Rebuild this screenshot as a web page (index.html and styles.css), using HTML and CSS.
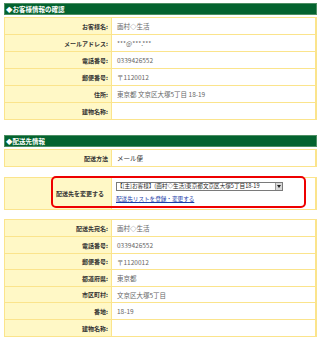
FILE: index.html
```html
<!DOCTYPE html>
<html lang="ja">
<head>
<meta charset="utf-8">
<link rel="stylesheet" href="styles.css">
</head>
<body>
<div class="page">
  <div class="head first">◆お客様情報の確認</div>
  <div class="tbl">
    <div class="row"><div class="lab">お客様名:</div><div class="val">画村◇生活</div></div>
    <div class="row"><div class="lab">メールアドレス:</div><div class="val">***@***.***</div></div>
    <div class="row"><div class="lab">電話番号:</div><div class="val">0339426552</div></div>
    <div class="row"><div class="lab">郵便番号:</div><div class="val">〒1120012</div></div>
    <div class="row"><div class="lab">住所:</div><div class="val">東京都 文京区大塚5丁目 18-19</div></div>
    <div class="row"><div class="lab">建物名称:</div><div class="val"></div></div>
  </div>

  <div class="head second">◆配送先情報</div>
  <div class="tbl">
    <div class="row"><div class="lab">配送方法</div><div class="val dark">メール便</div></div>
  </div>

  <div class="tbl gap">
    <div class="row tall">
      <div class="lab mid">配送先を変更する</div>
      <div class="val stack">
        <div class="sel"><span class="seltext">【[主]お客様】(画村◇生活)東京都文京区大塚5丁目18-19</span><span class="arrow"></span></div>
        <a class="link" href="#">配送先リストを登録・変更する</a>
      </div>
    </div>
  </div>

  <div class="tbl gap2">
    <div class="row"><div class="lab">配送先宛名:</div><div class="val">画村◇生活</div></div>
    <div class="row"><div class="lab">電話番号:</div><div class="val">0339426552</div></div>
    <div class="row r15"><div class="lab">郵便番号:</div><div class="val">〒1120012</div></div>
    <div class="row"><div class="lab">都道府県:</div><div class="val">東京都</div></div>
    <div class="row r15"><div class="lab">市区町村:</div><div class="val">文京区大塚5丁目</div></div>
    <div class="row"><div class="lab">番地:</div><div class="val">18-19</div></div>
    <div class="row"><div class="lab">建物名称:</div><div class="val"></div></div>
  </div>

  <div class="mark"></div>
</div>
</body>
</html>
```

FILE: styles.css
```css
html, body {
  margin: 0;
  padding: 0;
  background: #ffffff;
}
.page {
  position: relative;
  width: 313px;
  margin-left: 4px;
  padding-top: 3px;
  font-family: "Noto Sans CJK JP", "Liberation Sans", sans-serif;
  font-size: 6px;
}
.head {
  height: 10px;
  line-height: 10px;
  background: #04632f;
  border: 1px solid #4d8f63;
  color: #ffffff;
  font-weight: bold;
  font-size: 6.5px;
  padding-left: 1px;
  margin-bottom: 2px;
  white-space: nowrap;
}
.second {
  margin-top: 15px;
}
.tbl {
  border: 1px solid #fbe48c;
  border-right-width: 2px;
}
.gap { margin-top: 10px; }
.gap2 { margin-top: 9px; }
.row {
  display: grid;
  grid-template-columns: 107px 1fr;
  height: 16px;
  border-top: 1px solid #fbe48c;
}
.row:first-child { border-top: none; }
.row.r15 { height: 15px; }
.row.tall { height: 31px; }
.lab {
  background: #fff8c6;
  border-right: 1px solid #fbe48c;
  font-weight: bold;
  color: #333333;
  padding-right: 3px;
  display: flex;
  align-items: center;
  justify-content: flex-end;
  white-space: nowrap;
}
.lab.mid { padding-right: 7px; }
.val {
  color: #666666;
  padding-left: 5px;
  display: flex;
  align-items: center;
  white-space: nowrap;
  font-size: 6.5px;
}
.val.dark { color: #333333; }
.stack {
  flex-direction: column;
  align-items: flex-start;
  justify-content: flex-start;
  padding-top: 4px;
  padding-left: 4px;
}
.sel {
  display: flex;
  align-items: center;
  width: 165px;
  height: 7px;
  border: 1px solid #7a7a7a;
  background: #ffffff;
  color: #222222;
  font-size: 5.6px;
  overflow: hidden;
}
.seltext {
  flex: 1;
  overflow: hidden;
  line-height: 7px;
}
.arrow {
  width: 6px;
  height: 7px;
  background: #d8d8d8;
  border-left: 1px solid #9a9a9a;
  position: relative;
}
.arrow::after {
  content: "";
  position: absolute;
  left: 1px;
  top: 2px;
  border-left: 2px solid transparent;
  border-right: 2px solid transparent;
  border-top: 3px solid #222222;
}
.link {
  margin-top: 4px;
  color: #1a3ca8;
  font-size: 5.6px;
  text-decoration: underline;
}
.mark {
  position: absolute;
  left: 47px;
  top: 176px;
  width: 251px;
  height: 28px;
  border: 2px solid #ee0000;
  border-radius: 5px;
}
```
